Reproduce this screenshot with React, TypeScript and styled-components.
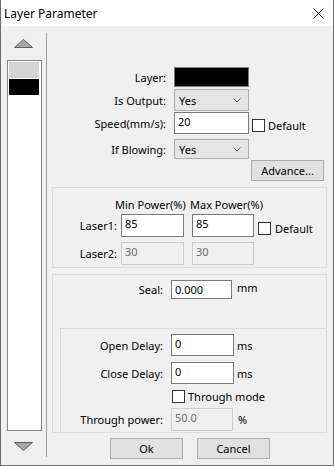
import React from "react";
import styled, { createGlobalStyle } from "styled-components";

const GlobalStyle = createGlobalStyle`
  html, body { margin: 0; padding: 0; background: #ffffff; }
  body {
    font-family: "Noto Sans", "Liberation Sans", sans-serif;
    font-size: 11px;
    color: #000;
  }
  * { box-sizing: border-box; }
`;

const Window = styled.div`
  width: 334px;
  height: 466px;
  display: flex;
  flex-direction: column;
  border: 1px solid #6b6b6b;
  border-top: none;
  background: #f0f0f0;
  overflow: hidden;
`;

const TitleBar = styled.div`
  height: 26px;
  flex: none;
  background: #fff;
  display: flex;
  align-items: center;
  justify-content: space-between;
  padding: 0 9px 0 3px;
  font-size: 12px;
`;

const Body = styled.div`
  flex: 1;
  display: flex;
`;

const LeftCol = styled.div`
  width: 45px;
  flex: none;
  display: flex;
  flex-direction: column;
  padding-left: 6px;
`;

const Arrow = styled.svg<{ $top: number }>`
  display: block;
  margin: ${(p) => p.$top}px 0 0 7px;
`;

const LayerList = styled.div`
  margin-top: 12px;
  width: 35px;
  height: 371px;
  border: 1px solid #828790;
  background: #fff;
  padding: 1px 2px 1px 1px;
  display: flex;
  flex-direction: column;
  gap: 1px;
`;

const LayerItem = styled.div<{ $color: string }>`
  height: 16px;
  background: ${(p) => p.$color};
`;

const Separator = styled.div`
  width: 1px;
  flex: none;
  background: #a0a0a0;
  margin: 7px 0 8px;
`;

const RightPane = styled.div`
  flex: 1;
  display: flex;
  flex-direction: column;
`;

const ScrollArea = styled.div`
  height: 407px;
  overflow: hidden;
  display: flex;
  flex-direction: column;
  padding-top: 41px;
`;

const Row = styled.div<{ $h: number; $mt?: number; $pl?: number }>`
  display: flex;
  align-items: center;
  height: ${(p) => p.$h}px;
  margin-top: ${(p) => p.$mt ?? 0}px;
  padding-left: ${(p) => p.$pl ?? 0}px;
  flex: none;
`;

const Label = styled.span<{ $w: number; $gap: number }>`
  width: ${(p) => p.$w}px;
  margin-right: ${(p) => p.$gap}px;
  text-align: right;
  white-space: nowrap;
  flex: none;
`;

const Swatch = styled.div`
  width: 75px;
  height: 20px;
  background: #000;
  border: 1px solid #7a7a7a;
`;

const Select = styled.div<{ $h: number }>`
  width: 75px;
  height: ${(p) => p.$h}px;
  background: #e5e5e5;
  border: 1px solid #acacac;
  display: flex;
  align-items: center;
  justify-content: space-between;
  padding: 0 7px 0 4px;
`;

const Input = styled.div<{ $w: number; $h: number; $disabled?: boolean }>`
  width: ${(p) => p.$w}px;
  height: ${(p) => p.$h}px;
  flex: none;
  background: ${(p) => (p.$disabled ? "#f0f0f0" : "#fff")};
  border: 1px solid ${(p) => (p.$disabled ? "#cccccc" : "#7a7a7a")};
  color: ${(p) => (p.$disabled ? "#6d6d6d" : "#000")};
  padding: 1px 3px;
  line-height: 15px;
  white-space: nowrap;
`;

const Check = styled.div`
  width: 13px;
  height: 13px;
  flex: none;
  background: #fff;
  border: 1px solid #333;
`;

const CheckLabel = styled.label<{ $ml: number }>`
  display: flex;
  align-items: center;
  gap: ${(p) => p.$ml}px;
  margin-left: ${(p) => p.$ml}px;
  align-self: flex-end;
  margin-bottom: 1px;
`;

const Unit = styled.span<{ $ml: number; $top?: boolean }>`
  margin-left: ${(p) => p.$ml}px;
  align-self: ${(p) => (p.$top ? "flex-start" : "center")};
`;

const Button = styled.div<{ $w: number }>`
  width: ${(p) => p.$w}px;
  height: 21px;
  background: #e1e1e1;
  border: 1px solid #adadad;
  display: flex;
  align-items: center;
  justify-content: center;
`;

const AdvanceRow = styled.div`
  display: flex;
  justify-content: flex-end;
  padding-right: 9px;
  margin-top: 1px;
`;

const GroupBox = styled.div`
  border: 1px solid #dcdcdc;
  margin: 6px 6px 0 5px;
  flex: none;
`;

const PowerBox = styled(GroupBox)`
  padding: 9px 0 2px;
`;

const SealBox = styled(GroupBox)`
  flex: 1;
  display: flex;
  flex-direction: column;
  padding-top: 5px;
`;

const InnerBox = styled.div`
  flex: 1;
  margin: 29px 0 0 7px;
  border-top: 1px solid #dcdcdc;
  border-left: 1px solid #dcdcdc;
  padding-top: 5px;
  display: flex;
  flex-direction: column;
`;

const HeadRow = styled.div`
  display: flex;
  height: 15px;
  padding-left: 62px;
  align-items: center;
  white-space: nowrap;
`;

const Head = styled.span<{ $w: number }>`
  width: ${(p) => p.$w}px;
`;

const Buttons = styled.div`
  display: flex;
  justify-content: center;
  gap: 14px;
  margin-top: 5px;
`;

const Chevron = () => (
  <svg width="8" height="5" viewBox="0 0 8 5">
    <path d="M0.5 0.5 L4 4 L7.5 0.5" fill="none" stroke="#606060" strokeWidth="1" />
  </svg>
);

export default function App() {
  return (
    <>
      <GlobalStyle />
      <Window>
        <TitleBar>
          <span>Layer Parameter</span>
          <svg width="11" height="11" viewBox="0 0 11 11">
            <path d="M0.5 0.5 L10.5 10.5 M10.5 0.5 L0.5 10.5" stroke="#000" strokeWidth="1" />
          </svg>
        </TitleBar>
        <Body>
          <LeftCol>
            <Arrow $top={13} width="19" height="9" viewBox="0 0 19 9">
              <polygon points="0.5,8.5 9.5,0.5 18.5,8.5" fill="#a8a8a8" stroke="#5a5a5a" strokeWidth="1" />
            </Arrow>
            <LayerList>
              <LayerItem $color="#d4d4d4" />
              <LayerItem $color="#000000" />
            </LayerList>
            <Arrow $top={11} width="19" height="9" viewBox="0 0 19 9">
              <polygon points="0.5,0.5 9.5,8.5 18.5,0.5" fill="#a8a8a8" stroke="#5a5a5a" strokeWidth="1" />
            </Arrow>
          </LeftCol>
          <Separator />
          <RightPane>
            <ScrollArea>
              <Row $h={20}>
                <Label $w={119} $gap={8}>Layer:</Label>
                <Swatch />
              </Row>
              <Row $h={22} $mt={2}>
                <Label $w={119} $gap={8}>Is Output:</Label>
                <Select $h={22}>
                  <span>Yes</span>
                  <Chevron />
                </Select>
              </Row>
              <Row $h={22} $mt={1}>
                <Label $w={119} $gap={8}>Speed(mm/s):</Label>
                <Input $w={75} $h={22}>20</Input>
                <CheckLabel $ml={3}>
                  <Check />
                  <span>Default</span>
                </CheckLabel>
              </Row>
              <Row $h={20} $mt={5}>
                <Label $w={119} $gap={8}>If Blowing:</Label>
                <Select $h={20}>
                  <span>Yes</span>
                  <Chevron />
                </Select>
              </Row>
              <AdvanceRow>
                <Button $w={73}>Advance...</Button>
              </AdvanceRow>

              <PowerBox>
                <HeadRow>
                  <Head $w={75}>Min Power(%)</Head>
                  <Head $w={75}>Max Power(%)</Head>
                </HeadRow>
                <Row $h={23} $mt={2}>
                  <Label $w={64} $gap={4}>Laser1:</Label>
                  <Input $w={63} $h={23}>85</Input>
                  <Input $w={62} $h={23} style={{ marginLeft: 8 }}>85</Input>
                  <CheckLabel $ml={4}>
                    <Check />
                    <span>Default</span>
                  </CheckLabel>
                </Row>
                <Row $h={23} $mt={5}>
                  <Label $w={64} $gap={4}>Laser2:</Label>
                  <Input $w={63} $h={23} $disabled>30</Input>
                  <Input $w={62} $h={23} $disabled style={{ marginLeft: 8 }}>30</Input>
                </Row>
              </PowerBox>

              <SealBox>
                <Row $h={19}>
                  <Label $w={110} $gap={8}>Seal:</Label>
                  <Input $w={61} $h={19}>0.000</Input>
                  <Unit $ml={5} $top>mm</Unit>
                </Row>
                <InnerBox>
                  <Row $h={22}>
                    <Label $w={102} $gap={8}>Open Delay:</Label>
                    <Input $w={63} $h={22}>0</Input>
                    <Unit $ml={3}>ms</Unit>
                  </Row>
                  <Row $h={22} $mt={6}>
                    <Label $w={102} $gap={8}>Close Delay:</Label>
                    <Input $w={63} $h={22}>0</Input>
                    <Unit $ml={3}>ms</Unit>
                  </Row>
                  <Row $h={13} $mt={6} $pl={111}>
                    <Check />
                    <Unit $ml={3}>Through mode</Unit>
                  </Row>
                  <Row $h={23} $mt={5}>
                    <Label $w={102} $gap={8}>Through power:</Label>
                    <Input $w={62} $h={23} $disabled>50.0</Input>
                    <Unit $ml={5}>%</Unit>
                  </Row>
                </InnerBox>
              </SealBox>
            </ScrollArea>
            <Buttons>
              <Button $w={73}>Ok</Button>
              <Button $w={73}>Cancel</Button>
            </Buttons>
          </RightPane>
        </Body>
      </Window>
    </>
  );
}
